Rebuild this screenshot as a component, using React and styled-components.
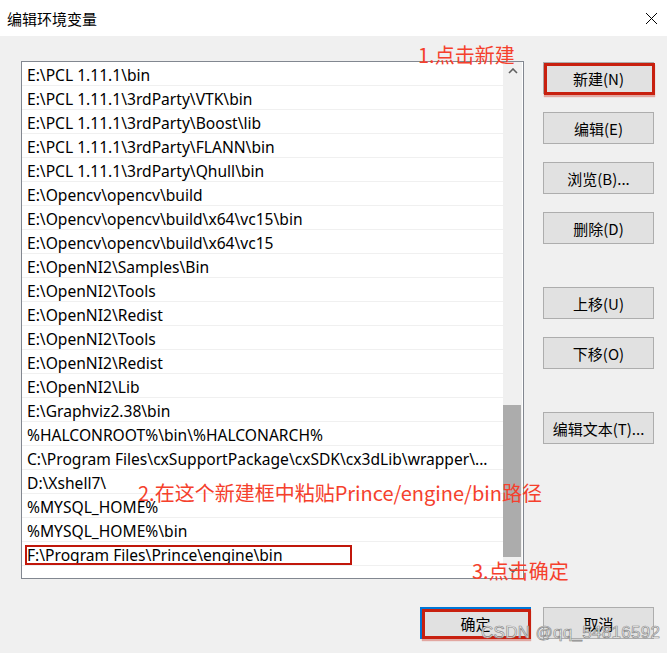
import React from 'react';
import styled, { createGlobalStyle } from 'styled-components';

const GlobalStyle = createGlobalStyle`
  html, body {
    margin: 0;
    padding: 0;
    background: #f0f0f0;
  }
  body {
    font-family: "Noto Sans", "Noto Sans CJK SC", sans-serif;
    color: #000;
  }
`;

const paths = [
  'E:\\PCL 1.11.1\\bin',
  'E:\\PCL 1.11.1\\3rdParty\\VTK\\bin',
  'E:\\PCL 1.11.1\\3rdParty\\Boost\\lib',
  'E:\\PCL 1.11.1\\3rdParty\\FLANN\\bin',
  'E:\\PCL 1.11.1\\3rdParty\\Qhull\\bin',
  'E:\\Opencv\\opencv\\build',
  'E:\\Opencv\\opencv\\build\\x64\\vc15\\bin',
  'E:\\Opencv\\opencv\\build\\x64\\vc15',
  'E:\\OpenNI2\\Samples\\Bin',
  'E:\\OpenNI2\\Tools',
  'E:\\OpenNI2\\Redist',
  'E:\\OpenNI2\\Tools',
  'E:\\OpenNI2\\Redist',
  'E:\\OpenNI2\\Lib',
  'E:\\Graphviz2.38\\bin',
  '%HALCONROOT%\\bin\\%HALCONARCH%',
  'C:\\Program Files\\cxSupportPackage\\cxSDK\\cx3dLib\\wrapper\\...',
  'D:\\Xshell7\\',
  '%MYSQL_HOME%',
  '%MYSQL_HOME%\\bin',
  'F:\\Program Files\\Prince\\engine\\bin',
];

const Window = styled.div`
  position: relative;
  width: 667px;
  height: 653px;
  overflow: hidden;
  background: #f0f0f0;
`;

const TitleBar = styled.div`
  height: 36px;
  background: #fff;
  display: flex;
  align-items: center;
  justify-content: space-between;
  padding: 0 9px 0 7px;
  font-family: "Noto Sans CJK SC", sans-serif;
  font-size: 15px;
`;

const Body = styled.div`
  display: grid;
  grid-template-columns: 503px 111px;
  column-gap: 19px;
  padding: 25px 0 0 21px;
`;

const ListBox = styled.div`
  height: 516px;
  border: 1px solid #828790;
  background: #fff;
  display: flex;
`;

const Rows = styled.div`
  flex: 1;
  display: flex;
  flex-direction: column;
`;

const Row = styled.div`
  position: relative;
  height: 21px;
  padding: 2px 0 0 5px;
  border-bottom: 1px solid #f0f0f0;
  display: flex;
  align-items: center;
  font-size: 15.6px;
  white-space: nowrap;

  ${(p) =>
    p.$marked &&
    `
    &::after {
      content: '';
      position: absolute;
      left: 3px;
      top: 3px;
      width: 323px;
      height: 16px;
      border: 2px solid #c1170b;
    }
  `}
`;

const ScrollBar = styled.div`
  width: 19px;
  margin-right: 1px;
  background: #f0f0f0;
  display: flex;
  flex-direction: column;
`;

const Arrow = styled.div`
  height: 17px;
  display: flex;
  align-items: center;
  justify-content: center;
  color: #606060;
`;

const Track = styled.div`
  flex: 1;
  display: flex;
  flex-direction: column;
`;

const Thumb = styled.div`
  width: 18px;
  background: #acacac;
  margin-top: ${(p) => p.$top}px;
  height: ${(p) => p.$height}px;
`;

const ButtonColumn = styled.div`
  display: flex;
  flex-direction: column;
  gap: 18px;
  padding-top: 1px;
`;

const Button = styled.div`
  position: relative;
  box-sizing: border-box;
  width: 111px;
  height: 32px;
  margin-top: ${(p) => (p.$spaced ? 25 : 0)}px;
  background: #e1e1e1;
  border: ${(p) => (p.$default ? '2px solid #0078d7' : '1px solid #adadad')};
  display: flex;
  align-items: center;
  justify-content: center;
  font-family: "Noto Sans CJK SC", sans-serif;
  font-size: 15px;

  ${(p) =>
    p.$marked &&
    `
    &::after {
      content: '';
      position: absolute;
      left: 0;
      top: 0;
      right: -2px;
      bottom: -2px;
      border: 3px solid #c8200f;
      box-shadow: 0 2px 1px rgba(200, 32, 15, 0.35);
    }
  `}
`;

const Footer = styled.div`
  display: flex;
  justify-content: flex-end;
  gap: 12px;
  padding: 28px 13px 0 0;
`;

const Note = styled.div`
  position: absolute;
  left: ${(p) => p.$x}px;
  top: ${(p) => p.$y}px;
  font-family: "Noto Sans CJK SC", sans-serif;
  font-size: 20px;
  line-height: 24px;
  color: #f5402c;
  white-space: nowrap;
`;

const Watermark = styled.div`
  position: absolute;
  left: 481px;
  top: 623px;
  font-family: "Liberation Sans", sans-serif;
  font-size: 17px;
  color: rgba(255, 255, 255, 0.85);
  -webkit-text-stroke: 0.7px #8a8a8a;
  letter-spacing: 0.3px;
  white-space: nowrap;
`;

const Chevron = ({ down }) => (
  <svg width="10" height="6" viewBox="0 0 10 6">
    <polyline
      points={down ? '1,1 5,5 9,1' : '1,5 5,1 9,5'}
      fill="none"
      stroke="currentColor"
      strokeWidth="1.6"
    />
  </svg>
);

const CloseIcon = () => (
  <svg width="13" height="13" viewBox="0 0 13 13">
    <path d="M1 1 L12 12 M12 1 L1 12" stroke="#000" strokeWidth="1" />
  </svg>
);

export default function App() {
  return (
    <Window>
      <GlobalStyle />
      <TitleBar>
        <span>编辑环境变量</span>
        <CloseIcon />
      </TitleBar>
      <Body>
        <ListBox>
          <Rows>
            {paths.map((p, i) => (
              <Row key={i} $marked={i === paths.length - 1}>
                {p}
              </Row>
            ))}
          </Rows>
          <ScrollBar>
            <Arrow>
              <Chevron />
            </Arrow>
            <Track>
              <Thumb $top={326} $height={152} />
            </Track>
            <Arrow>
              <Chevron down />
            </Arrow>
          </ScrollBar>
        </ListBox>
        <ButtonColumn>
          <Button $marked>新建(N)</Button>
          <Button>编辑(E)</Button>
          <Button>浏览(B)...</Button>
          <Button>删除(D)</Button>
          <Button $spaced>上移(U)</Button>
          <Button>下移(O)</Button>
          <Button $spaced>编辑文本(T)...</Button>
        </ButtonColumn>
      </Body>
      <Footer>
        <Button $default $marked>确定</Button>
        <Button>取消</Button>
      </Footer>
      <Note $x={418} $y={43}>1.点击新建</Note>
      <Note $x={138} $y={481}>2.在这个新建框中粘贴Prince/engine/bin路径</Note>
      <Note $x={472} $y={559}>3.点击确定</Note>
      <Watermark>CSDN @qq_54816592</Watermark>
    </Window>
  );
}
